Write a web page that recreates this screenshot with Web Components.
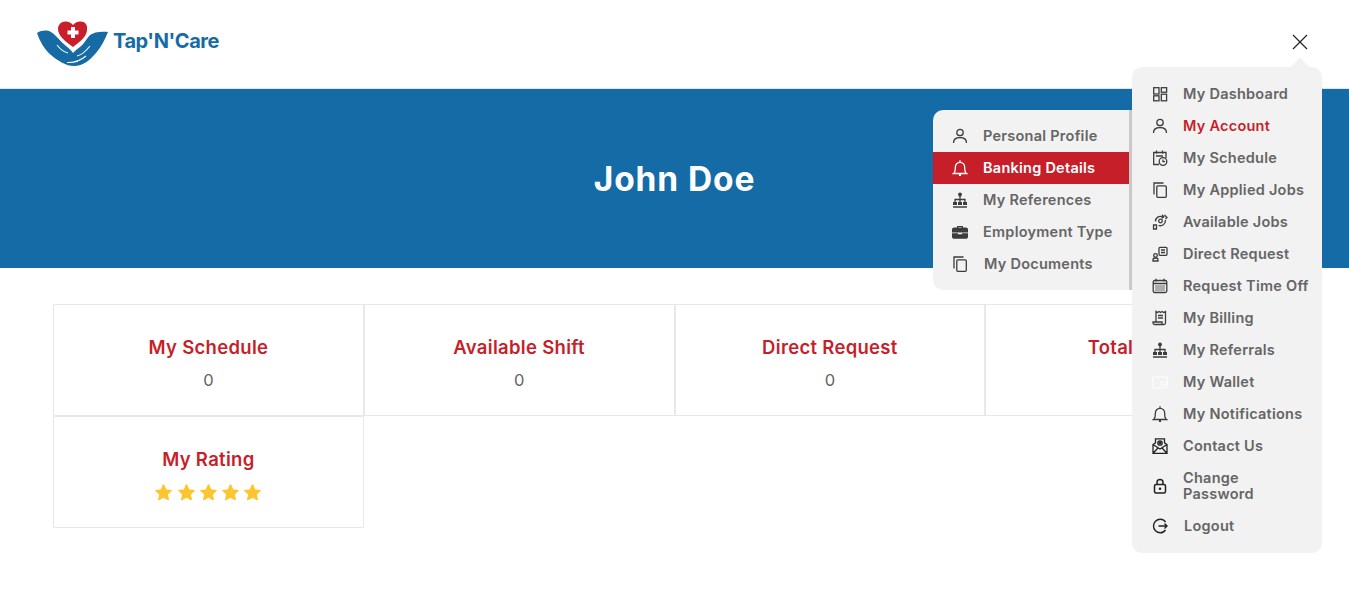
<!DOCTYPE html>
<html>
<head>
<meta charset="utf-8">
<style>
  html, body { margin: 0; padding: 0; background: #fff; overflow: hidden; }
  body { font-family: Inter, "Liberation Sans", sans-serif; width: 1349px; height: 615px; position: relative; }
</style>
</head>
<body>

<template id="tnc-header">
  <style>
    :host { display: flex; align-items: center; justify-content: space-between; height: 88px; padding: 0 40px 0 36px; background: #fff; }
    .logo { display: flex; align-items: center; gap: 2px; }
    .word { font: 700 20px Inter, "Open Sans", sans-serif; color: #166ba5; letter-spacing: -0.45px; margin-bottom: 6px; }
    .close { width: 18px; height: 18px; margin-bottom: 4px; display: block; }
  </style>
  <div class="logo">
    <svg width="75" height="48" viewBox="0 0 75 48">
      <path d="M1 13 C6 10 11 10 15 12 C20 15 24 21 30 26 C33 28.500 36 31 37 33 C39 31 41 29 44 27 C48 24 50 19 54 15 C58 12 65 11 72 12 C69 19 66 26 60 33 C54 40 47 46 38 46 C30 46 22 41 15 35 C9 30 4 22 1 13Z" fill="#166ba5"/>
      <path d="M21 25 C24 29 28 32 32 33 M41 36 C46 35 50 31 54 26 M31 42.500 C38 43 44 41 50 36" stroke="#fff" stroke-width="1.100" fill="none"/>
      <path d="M37 27 C30 22 22 16 22 9 C22 4 26 1 30 1.500 C33 1.500 35 3 37 5 C39 3 41 1.500 44 1.500 C48 1 52 4 51 10 C51 16 44 22 37 27Z" fill="#c81f2a"/>
      <path d="M35 7 h4 v3.500 h3.500 v4 h-3.500 v3.500 h-4 v-3.500 h-3.500 v-4 h3.500z" fill="#fff"/>
    </svg>
    <span class="word">Tap'N'Care</span>
  </div>
  <svg class="close" viewBox="0 0 18 18"><path d="M2 2 L16 16 M16 2 L2 16" stroke="#222" stroke-width="1.200" fill="none"/></svg>
</template>

<template id="tnc-banner">
  <style>
    :host { display: flex; align-items: center; justify-content: center; height: 180px; border-top: 1px solid #dfe6ea; box-sizing: border-box; background: #156ba6; color: #fff; }
    h1 { margin: 0; font: 700 33.500px Inter, sans-serif; letter-spacing: 0.9px; }
  </style>
  <h1><slot></slot></h1>
</template>

<template id="tnc-card">
  <style>
    :host { display: flex; flex-direction: column; align-items: center; box-sizing: border-box; height: 112px; border: 1px solid #e8e8e8; padding-top: 29px; color: #646464; background: #fff; }
    .t { font: 600 18.500px Inter, sans-serif; color: #c71f2a; line-height: 26px; letter-spacing: 0.3px; }
    .v { font: 400 16.500px Inter, sans-serif; line-height: 24px; margin-top: 8px; }
  </style>
  <div class="t"></div>
  <div class="v"><slot></slot></div>
</template>

<template id="tnc-stars">
  <style>:host { display: flex; gap: 3.300px; margin-top: 3px; } svg { width: 19px; height: 19px; display: block; }</style>
</template>

<template id="tnc-menu">
  <style>
    :host { display: block; position: absolute; box-sizing: border-box; background: #f2f2f2; border-radius: 10px; }
  </style>
  <slot></slot>
</template>

<template id="tnc-item">
  <style>
    :host { display: flex; align-items: center; padding: 8px 8px 8px var(--item-pad, 20px); box-sizing: border-box; color: #656565; font: 600 14.500px/16px Inter, sans-serif; letter-spacing: 0.25px; }
    :host([active]) { background: #c71f2a; color: #fff; }
    :host([current]) { color: #c71f2a; }
    .i { width: 16px; height: 16px; flex: none; margin-right: 15px; color: #3c3c3c; }
    :host([active]) .i { color: #fff; }
    :host([wide]) .i { margin-right: 16px; }
    svg { display: block; width: 16px; height: 16px; fill: none; stroke: currentColor; stroke-width: 1.300; }
    .fill { fill: currentColor; stroke: none; }
  </style>
  <div class="i"></div>
  <div><slot></slot></div>
</template>

<tnc-header></tnc-header>
<tnc-banner>John Doe</tnc-banner>

<div id="grid" style="display:grid;grid-template-columns:repeat(4,310.750px);margin:36px 0 0 53px;width:1244px;">
  <tnc-card title-text="My Schedule">0</tnc-card>
  <tnc-card title-text="Available Shift">0</tnc-card>
  <tnc-card title-text="Direct Request">0</tnc-card>
  <tnc-card title-text="Total Hours">0</tnc-card>
  <tnc-card title-text="My Rating"><tnc-stars></tnc-stars></tnc-card>
</div>

<tnc-menu id="sub" style="--item-pad:19px;left:933px;top:110px;width:200px;height:180px;padding-top:10px;border-radius:10px 0 0 10px;border-right:4px solid #c9c9c9;">
  <tnc-item icon="user">Personal Profile</tnc-item>
  <tnc-item icon="bell" active>Banking Details</tnc-item>
  <tnc-item icon="tree">My References</tnc-item>
  <tnc-item icon="case">Employment Type</tnc-item>
  <tnc-item icon="copy" wide>My Documents</tnc-item>
</tnc-menu>

<div id="notch" style="position:absolute;left:1294px;top:60px;width:12px;height:12px;background:#f2f2f2;transform:rotate(45deg);"></div>
<tnc-menu id="main" style="left:1132px;top:67px;width:190px;height:486px;padding-top:11px;">
  <tnc-item icon="dash">My Dashboard</tnc-item>
  <tnc-item icon="user" current>My Account</tnc-item>
  <tnc-item icon="sched">My Schedule</tnc-item>
  <tnc-item icon="copy">My Applied Jobs</tnc-item>
  <tnc-item icon="jobs">Available Jobs</tnc-item>
  <tnc-item icon="direct">Direct Request</tnc-item>
  <tnc-item icon="cal">Request Time Off</tnc-item>
  <tnc-item icon="bill">My Billing</tnc-item>
  <tnc-item icon="tree">My Referrals</tnc-item>
  <tnc-item icon="wallet">My Wallet</tnc-item>
  <tnc-item icon="bell">My Notifications</tnc-item>
  <tnc-item icon="mail">Contact Us</tnc-item>
  <tnc-item icon="lock">Change<br>Password</tnc-item>
  <tnc-item icon="logout" wide>Logout</tnc-item>
</tnc-menu>

<script>
  const ICONS = {
    user: '<svg viewBox="0 0 16 16"><circle cx="8" cy="4.500" r="3.200"/><path d="M1.500 15 C1.500 11 4.500 9.500 8 9.500 C11.500 9.500 14.500 11 14.500 15"/></svg>',
    bell: '<svg viewBox="0 0 16 16"><path d="M1.500 13.500 C3 12.500 3.300 10.500 3.300 7.500 C3.300 4.300 5.300 2.300 8 2.300 C10.700 2.300 12.700 4.300 12.700 7.500 C12.700 10.500 13 12.500 14.500 13.500 Z M8 0.300 V2.300"/><circle class="fill" cx="8" cy="15" r="1.200"/></svg>',
    tree: '<svg viewBox="0 0 16 16"><circle class="fill" cx="8" cy="2.500" r="1.900"/><path d="M8 4 V11 M3 11 V7.500 H13 V11"/><rect class="fill" x="1" y="10" width="4" height="3"/><rect class="fill" x="6" y="10" width="4" height="3"/><rect class="fill" x="11" y="10" width="4" height="3"/><path d="M1 15 H15" stroke-width="1.500"/></svg>',
    case: '<svg viewBox="0 0 16 16"><path class="fill" d="M5 3.500 V2 H11 V3.500 H14 C15 3.500 16 4.300 16 5.500 V8.400 H0 V5.500 C0 4.300 1 3.500 2 3.500 Z M6.200 3.500 H9.800 V3 H6.200 Z M0 9.200 H6 V10.200 H10 V9.200 H16 V13 C16 14 15 14.800 14 14.800 H2 C1 14.800 0 14 0 13 Z"/></svg>',
    copy: '<svg viewBox="0 0 16 16"><path d="M11.500 1 H2 V12.500"/><rect x="4.800" y="3.800" width="9.500" height="11.500" rx="1"/></svg>',
    dash: '<svg viewBox="0 0 16 16"><rect x="1.700" y="1.700" width="5.300" height="6.300"/><rect x="1.700" y="9.800" width="5.300" height="5"/><rect x="9.300" y="1.700" width="5.300" height="4.500"/><rect x="9.300" y="8.200" width="5.300" height="6.600"/></svg>',
    sched: '<svg viewBox="0 0 16 16"><path d="M7 14.500 H1.700 V2.500 H14 V8 M4.500 0.500 V3.800 M10.500 0.500 V3.800 M4 6 H11"/><circle cx="11" cy="11.500" r="3.800"/><path d="M11 9.500 V11.700 H13"/></svg>',
    jobs: '<svg viewBox="0 0 16 16" stroke-width="1"><circle cx="8.500" cy="7" r="1.800"/><path d="M3.500 7.500 C3.500 3.500 7 1.500 10.500 2.800 M13.500 6 C13.500 10.500 10 12.500 6.500 11.500 M10 .8 L11.800 2.800 L9.800 4.300 M12.500 1 L15 3.500 L13.500 5 M1.500 11 H4.500 V15 H1.500 Z"/></svg>',
    direct: '<svg viewBox="0 0 16 16"><rect x="7" y="1.300" width="8" height="8" rx="1"/><path d="M9 4 H13 M9 6.500 H13"/><circle cx="3.500" cy="9.500" r="1.800"/><path d="M1 15 V13.500 C1 12.500 2 12 3.500 12 C5 12 6 12.500 6 13.500 V15 Z"/></svg>',
    cal: '<svg viewBox="0 0 16 16"><rect x="1.200" y="2.500" width="13.600" height="12" rx="1.500"/><path d="M4 .8 V3.500 M12 .8 V3.500 M1 5.500 H15"/><path d="M3.500 8 H12.500 M3.500 10 H12.500 M3.500 12 H12.500" stroke-dasharray="1 1"/></svg>',
    bill: '<svg viewBox="0 0 16 16"><path d="M4 12 V1.500 L5.500 2.500 L7 1.500 L8.500 2.500 L10 1.500 L11.500 2.500 L13.500 1.500 V13 C13.500 14 13 14.500 12 14.500 H2.500 C1.500 14.500 1 14 1 12 H10 V14 M6 5.500 H11 M6 8 H11"/></svg>',
    wallet: '<svg viewBox="0 0 16 16" style="color:#fafafa"><rect x="1" y="3" width="14" height="11"/><path d="M9 8 H15 V11 H9 Z"/></svg>',
    mail: '<svg viewBox="0 0 16 16" style="color:#222"><path d="M1 6.500 L3.500 4.800 V.8 H12.500 V4.800 L15 6.500 V15.300 H1 Z M1 6.500 L8 11 L15 6.500 M1 15.300 L6 10 M15 15.300 L10 10"/><circle cx="8" cy="5" r="2.200"/><circle cx="8" cy="5" r=".8"/></svg>',
    lock: '<svg viewBox="0 0 16 16" style="color:#222"><rect x="2.500" y="6.500" width="11" height="8.500" rx="1.500" stroke-width="1.500"/><path d="M5 6.500 V4.500 C5 2.500 6.500 1.500 8 1.500 C9.500 1.500 11 2.500 11 4.500 V6.500" stroke-width="1.500"/><circle class="fill" cx="8" cy="10.700" r="1.300"/></svg>',
    logout: '<svg viewBox="0 0 16 16" style="color:#222"><path d="M13.500 4 C12.200 2 10.300 1.200 8.300 1.200 C4.500 1.200 1.500 4.300 1.500 8 C1.500 11.800 4.500 14.800 8.300 14.800 C10.300 14.800 12.200 14 13.500 12 M6.500 8 H15 M12.500 5.500 L15 8 L12.500 10.500" stroke-width="1.400"/></svg>'
  };

  class TncHeader extends HTMLElement {
    constructor() {
      super();
      this.attachShadow({ mode: "open" });
      this.shadowRoot.appendChild(document.querySelector("#tnc-header").content.cloneNode(true));
    }
  }
  class TncBanner extends HTMLElement {
    constructor() {
      super();
      this.attachShadow({ mode: "open" });
      this.shadowRoot.appendChild(document.querySelector("#tnc-banner").content.cloneNode(true));
    }
  }
  class TncCard extends HTMLElement {
    constructor() {
      super();
      this.attachShadow({ mode: "open" });
      this.shadowRoot.appendChild(document.querySelector("#tnc-card").content.cloneNode(true));
    }
    connectedCallback() {
      this.shadowRoot.querySelector(".t").textContent = this.getAttribute("title-text");
    }
  }
  class TncStars extends HTMLElement {
    constructor() {
      super();
      this.attachShadow({ mode: "open" });
      this.shadowRoot.appendChild(document.querySelector("#tnc-stars").content.cloneNode(true));
      for (let i = 0; i < 5; i++) {
        this.shadowRoot.innerHTML += '<svg viewBox="0 0 20 20"><path fill="#fdc52f" stroke="#fdc52f" stroke-width="1.500" stroke-linejoin="round" d="M10 2 L12.400 7.300 L18 8 L13.800 11.900 L15 17.500 L10 14.700 L5 17.500 L6.200 11.900 L2 8 L7.600 7.300 Z"/></svg>';
      }
    }
  }
  class TncMenu extends HTMLElement {
    constructor() {
      super();
      this.attachShadow({ mode: "open" });
      this.shadowRoot.appendChild(document.querySelector("#tnc-menu").content.cloneNode(true));
    }
  }
  class TncItem extends HTMLElement {
    constructor() {
      super();
      this.attachShadow({ mode: "open" });
      this.shadowRoot.appendChild(document.querySelector("#tnc-item").content.cloneNode(true));
    }
    connectedCallback() {
      this.shadowRoot.querySelector(".i").innerHTML = ICONS[this.getAttribute("icon")] || "";
    }
  }
  customElements.define("tnc-header", TncHeader);
  customElements.define("tnc-banner", TncBanner);
  customElements.define("tnc-card", TncCard);
  customElements.define("tnc-stars", TncStars);
  customElements.define("tnc-menu", TncMenu);
  customElements.define("tnc-item", TncItem);
</script>
</body>
</html>
